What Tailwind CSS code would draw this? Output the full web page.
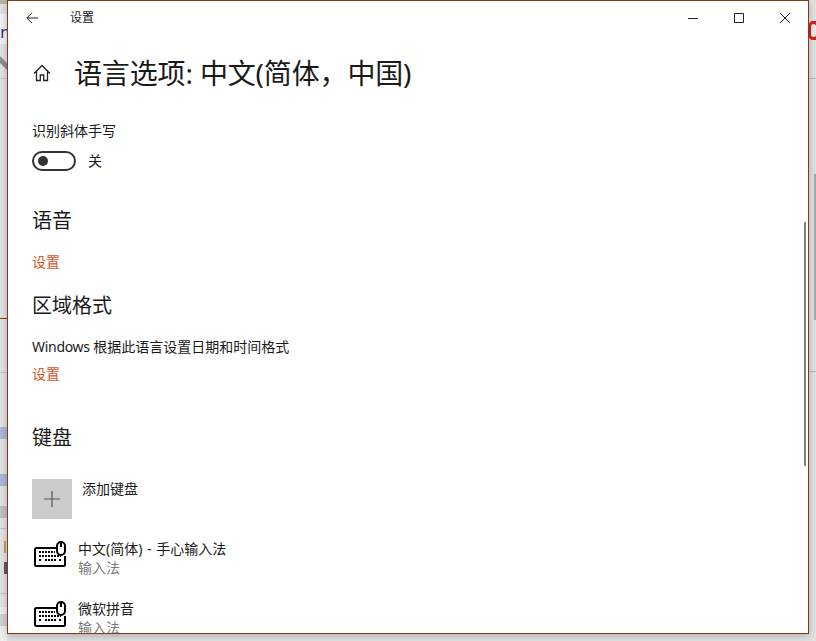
<!DOCTYPE html>
<html lang="zh-CN">
<head>
  <meta charset="UTF-8" />
  <meta name="viewport" content="width=device-width, initial-scale=1.0"/>
  <title>设置</title>
  <script src="https://cdn.jsdelivr.net/npm/@tailwindcss/browser@4"></script>
</head>
<body class="bg-[#e3e3e3] overflow-hidden font-['Noto_Sans','Noto_Sans_CJK_SC',sans-serif]">
  <div class="relative w-[816px] h-[641px] overflow-hidden">

    <!-- bits of the desktop behind the window -->
    <div class="absolute left-0 top-0 w-[7px] h-[4px] bg-[#b9b2a6]"></div>
    <div class="absolute left-0 top-[14px] w-[7px] h-[30px] bg-[#f4f4f4]"></div>
    <div class="absolute left-0 top-[21px] text-[17px] leading-[22px] text-[#1c3f94]">n</div>
    <svg class="absolute left-0 top-[56px] w-[7px] h-[16px]" viewBox="0 0 7 16" fill="#8f8f8f"><path d="M0 0l7 7v7L0 7z"/></svg>
    <div class="absolute left-0 top-[78px] w-[7px] h-px bg-[#c8c8c8]"></div>
    <div class="absolute left-0 top-[318px] w-[7px] h-px bg-[#8a3a12]"></div>
    <div class="absolute left-0 top-[372px] w-[7px] h-px bg-[#c4c4c4]"></div>
    <!-- blurred scraps of text from the window behind -->
    <div class="absolute left-0 top-[427px] w-[7px] h-[12px] bg-[#6f8fd0]/50"></div>
    <div class="absolute left-0 top-[474px] w-[7px] h-[12px] bg-[#6f8fd0]/50"></div>
    <div class="absolute left-0 top-[506px] w-[7px] h-[12px] bg-[#a0a0a0]/50"></div>
    <div class="absolute left-0 top-[528px] w-[7px] h-px bg-[#c4c4c4]"></div>
    <div class="absolute left-[4px] top-[541px] w-[2px] h-[12px] bg-[#c89a5a]"></div>
    <div class="absolute left-[4px] top-[562px] w-[3px] h-[12px] bg-[#222]/70"></div>
    <div class="absolute left-0 top-[593px] w-[7px] h-px bg-[#c4c4c4]"></div>
    <div class="absolute left-0 top-[607px] w-[7px] h-[34px] bg-[#f0f0f0]"></div>
    <div class="absolute left-0 top-[614px] w-[7px] h-[12px] bg-[#b0b0b0]/50"></div>
    <div class="absolute left-[809px] top-[21px] w-[7px] h-[19px] bg-[#d92020] rounded-l-sm"></div>
    <div class="absolute left-[811px] top-[24px] w-[5px] h-[13px] bg-[#eeeeee] rounded-sm"></div>
    <div class="absolute left-[809px] top-[78px] w-[7px] h-px bg-[#bcbcbc]"></div>
    <div class="absolute left-[809px] top-[371px] w-[7px] h-px bg-[#bcbcbc]"></div>
    <div class="absolute left-[814px] top-[174px] w-[2px] h-[146px] bg-[#a8a8a8]"></div>

    <!-- settings window -->
    <div class="absolute left-[7px] top-0 w-[802px] h-[634px] bg-white border border-[#8a3a12] shadow-[0_2px_8px_rgba(0,0,0,0.25)] overflow-hidden text-[#1a1a1a]">

      <!-- title bar -->
      <div class="flex items-center h-[33px] pt-[1px] pl-[18px]">
        <svg class="w-[12px] h-[12px]" viewBox="0 0 12 12" fill="none" stroke="#222" stroke-width="1"><path d="M12 6H.8M6 .8.8 6 6 11.200"/></svg>
        <span class="ml-[32px] text-[12px] leading-[32px]">设置</span>
        <div class="ml-auto flex items-center">
          <div class="w-[46px] flex justify-center"><svg class="w-[10px] h-[10px]" viewBox="0 0 10 10" stroke="#222" stroke-width="1"><path d="M0 5.500h10"/></svg></div>
          <div class="w-[46px] flex justify-center"><svg class="w-[10px] h-[10px]" viewBox="0 0 10 10" fill="none" stroke="#222" stroke-width="1"><path d="M.5.5h9v9h-9z"/></svg></div>
          <div class="w-[46px] flex justify-center"><svg class="w-[10px] h-[10px]" viewBox="0 0 10 10" stroke="#222" stroke-width="1"><path d="M0 0l10 10M10 0 0 10"/></svg></div>
        </div>
      </div>

      <!-- page header -->
      <div class="flex items-center h-[40px] mt-[19px] pl-[25px]">
        <svg class="w-[18px] h-[18px]" viewBox="0 0 18 18" fill="none" stroke="#222" stroke-width="1.300"><path d="M1 9.500 9 1.500l8 8M3.500 7.500v9h3.800v-5.500h3.400v5.500h3.800v-9"/></svg>
        <h1 class="ml-[23px] text-[28px] leading-[40px] font-normal whitespace-nowrap tracking-[-0.15px]">语言选项: 中文(简体，中国)</h1>
      </div>

      <!-- scrolling content -->
      <div class="pl-[24px]">
        <p class="mt-[28px] text-[14px] leading-[20px]">识别斜体手写</p>
        <div class="flex items-center mt-[10px] h-[20px]">
          <div class="flex items-center w-[44px] h-[20px] rounded-full border-2 border-[#333] pl-[4px]">
            <div class="w-[10px] h-[10px] rounded-full bg-[#333]"></div>
          </div>
          <span class="ml-[12px] text-[14px] leading-[20px]">关</span>
        </div>

        <h2 class="mt-[35px] text-[20px] leading-[30px] font-normal">语音</h2>
        <a class="block mt-[16px] text-[14px] leading-[20px] text-[#d9531e]">设置</a>

        <h2 class="mt-[19px] text-[20px] leading-[30px] font-normal">区域格式</h2>
        <p class="mt-[16px] text-[14px] leading-[20px]"><span class="tracking-[-0.3px]">Windows</span> 根据此语言设置日期和时间格式</p>
        <a class="block mt-[7px] text-[14px] leading-[20px] text-[#d9531e]">设置</a>

        <h2 class="mt-[39px] text-[20px] leading-[30px] font-normal">键盘</h2>

        <div class="flex mt-[26px]">
          <div class="flex items-center justify-center w-[40px] h-[40px] bg-[#cccccc]">
            <svg class="w-[16px] h-[16px]" viewBox="0 0 16 16" stroke="#555" stroke-width="1.200"><path d="M8 0v16M0 8h16"/></svg>
          </div>
          <span class="ml-[10px] text-[14px] leading-[20px]">添加键盘</span>
        </div>

        <div class="flex mt-[20px] h-[40px]">
          <svg class="ml-[2px] mt-[2px] w-[32px] h-[28px]" viewBox="0 0 32 28" fill="none" stroke="#000" stroke-width="2"><path d="M23 7H2.500Q1 7 1 8.500v15Q1 25 2.500 25h27q1.500 0 1.500-1.500V15"/><rect x="23" y="1" width="8" height="13" rx="4"/><path d="M27 1v5"/><path stroke-width="2" stroke-dasharray="2 1" d="M5 11h16M5 15h22M5 19h3M11 19h11M25 19h3"/></svg>
          <div class="ml-[12px]">
            <p class="text-[14px] leading-[19px] whitespace-nowrap">中文(简体) <span class="mx-[1px]">-</span> 手心输入法</p>
            <p class="text-[14px] leading-[19px] text-[#7a7a7a]">输入法</p>
          </div>
        </div>

        <div class="flex mt-[20px] h-[40px]">
          <svg class="ml-[2px] mt-[2px] w-[32px] h-[28px]" viewBox="0 0 32 28" fill="none" stroke="#000" stroke-width="2"><path d="M23 7H2.500Q1 7 1 8.500v15Q1 25 2.500 25h27q1.500 0 1.500-1.500V15"/><rect x="23" y="1" width="8" height="13" rx="4"/><path d="M27 1v5"/><path stroke-width="2" stroke-dasharray="2 1" d="M5 11h16M5 15h22M5 19h3M11 19h11M25 19h3"/></svg>
          <div class="ml-[12px]">
            <p class="text-[14px] leading-[19px] whitespace-nowrap">微软拼音</p>
            <p class="text-[14px] leading-[19px] text-[#7a7a7a]">输入法</p>
          </div>
        </div>
      </div>

      <!-- scrollbar thumb -->
      <div class="absolute right-[2px] top-[221px] w-[2px] h-[244px] bg-[#7f7f7f]"></div>
    </div>
  </div>
</body>
</html>
